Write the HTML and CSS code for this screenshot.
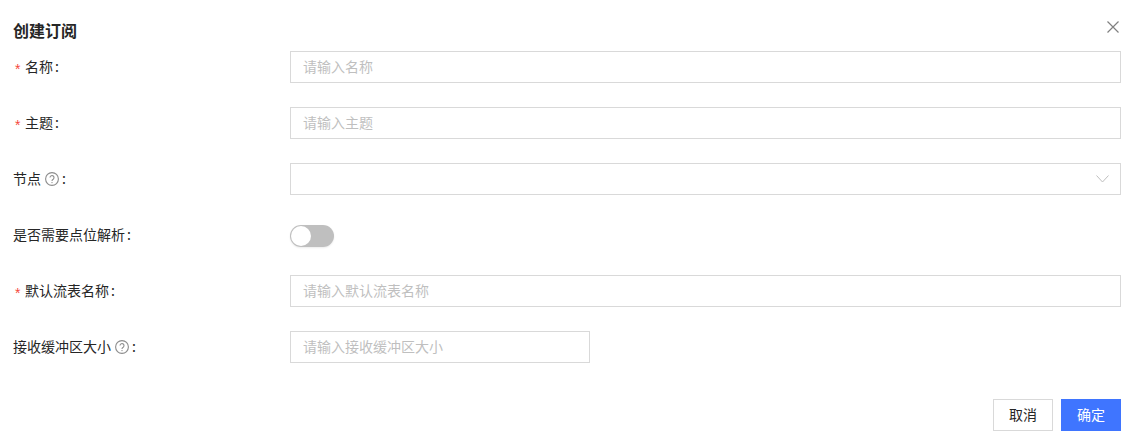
FILE: index.html
```html
<!DOCTYPE html>
<html lang="zh-CN">
<head>
<meta charset="utf-8">
<title>创建订阅</title>
<link rel="stylesheet" href="styles.css">
</head>
<body>
<div class="dialog">
  <header class="head">
    <h2 class="title">创建订阅</h2>
    <button class="close" type="button" aria-label="关闭">
      <svg width="12" height="12" viewBox="0 0 12 12"><path d="M.5.5l11 11M11.5.5l-11 11" fill="none" stroke="#808080" stroke-width="1.2"/></svg>
    </button>
  </header>
  <form class="form">
    <div class="row">
      <label class="label"><span class="star">*</span>名称<span class="colon">:</span></label>
      <div class="input ph">请输入名称</div>
    </div>
    <div class="row">
      <label class="label"><span class="star">*</span>主题<span class="colon">:</span></label>
      <div class="input ph">请输入主题</div>
    </div>
    <div class="row">
      <label class="label">节点<svg class="help" width="14" height="14" viewBox="0 0 14 14"><circle cx="7" cy="7" r="6.4" fill="none" stroke="#8c8c8c" stroke-width="1.1"/><path d="M5 5.6a2 2 0 1 1 3.2 1.6c-.8.5-1.2.9-1.2 1.7" fill="none" stroke="#8c8c8c" stroke-width="1.1"/><circle cx="7" cy="10.6" r=".7" fill="#8c8c8c"/></svg><span class="colon">:</span></label>
      <div class="input select">
        <svg width="13" height="8" viewBox="0 0 13 8"><path d="M.5.5l6 6.5 6-6.5" fill="none" stroke="#bfbfbf" stroke-width="1"/></svg>
      </div>
    </div>
    <div class="row">
      <label class="label">是否需要点位解析<span class="colon">:</span></label>
      <div class="switch"><span class="knob"></span></div>
    </div>
    <div class="row">
      <label class="label"><span class="star">*</span>默认流表名称<span class="colon">:</span></label>
      <div class="input ph">请输入默认流表名称</div>
    </div>
    <div class="row">
      <label class="label">接收缓冲区大小<svg class="help" width="14" height="14" viewBox="0 0 14 14"><circle cx="7" cy="7" r="6.4" fill="none" stroke="#8c8c8c" stroke-width="1.1"/><path d="M5 5.6a2 2 0 1 1 3.2 1.6c-.8.5-1.2.9-1.2 1.7" fill="none" stroke="#8c8c8c" stroke-width="1.1"/><circle cx="7" cy="10.6" r=".7" fill="#8c8c8c"/></svg><span class="colon">:</span></label>
      <div class="input ph short">请输入接收缓冲区大小</div>
    </div>
  </form>
  <footer class="foot">
    <button class="btn" type="button">取消</button>
    <button class="btn primary" type="button">确定</button>
  </footer>
</div>
</body>
</html>
```
FILE: styles.css
```css
* { box-sizing: border-box; }
html, body { margin: 0; background: #fff; }
body {
  font-family: "Noto Sans CJK SC", "Liberation Sans", sans-serif;
  font-size: 14px;
  color: #262626;
}
.dialog { width: 1137px; height: 447px; padding: 20px 16px 0 13px; }
.head { display: flex; justify-content: space-between; align-items: flex-start; height: 31px; }
.title { margin: 0; font-size: 16px; line-height: 20px; font-weight: 700; color: #262626; }
.close { border: 0; background: none; padding: 0; margin: 1px 2px 0 0; width: 12px; height: 12px; display: block; line-height: 0; }
.form { display: flex; flex-direction: column; gap: 24px; }
.row { display: grid; grid-template-columns: 277px 1fr; height: 32px; align-items: center; }
.label { display: flex; align-items: center; height: 32px; line-height: 30px; padding-bottom: 2px; white-space: nowrap; }
.star { width: 12px; margin-top: 6px; color: #f5483b; font-size: 14px; padding-left: 2px; font-family: "Liberation Sans", sans-serif; }
.colon { margin-left: 2px; }
.help { margin: 2px 0 0 4px; }
.help + .colon { margin-left: 3px; }
.input { height: 32px; border: 1px solid #d9d9d9; padding: 0 12px; line-height: 28px; background: #fff; }
.ph { color: #bfbfbf; }
.short { width: 300px; }
.select { display: flex; align-items: center; justify-content: flex-end; padding-right: 11px; }
.switch { width: 44px; height: 22px; margin-top: 2px; border-radius: 11px; background: #bfbfbf; padding: 1px; box-shadow: 0 1px 2px rgba(0,0,0,.08); }
.knob { display: block; width: 20px; height: 20px; border-radius: 50%; background: #fff; }
.foot { display: flex; justify-content: flex-end; gap: 8px; margin-top: 36px; }
.btn { width: 60px; height: 32px; padding: 0 0 2px; border: 1px solid #d9d9d9; background: #fff; color: #262626; font: inherit; font-size: 14px; }
.primary { background: #3f75ff; border-color: #3f75ff; color: #fff; }
```
